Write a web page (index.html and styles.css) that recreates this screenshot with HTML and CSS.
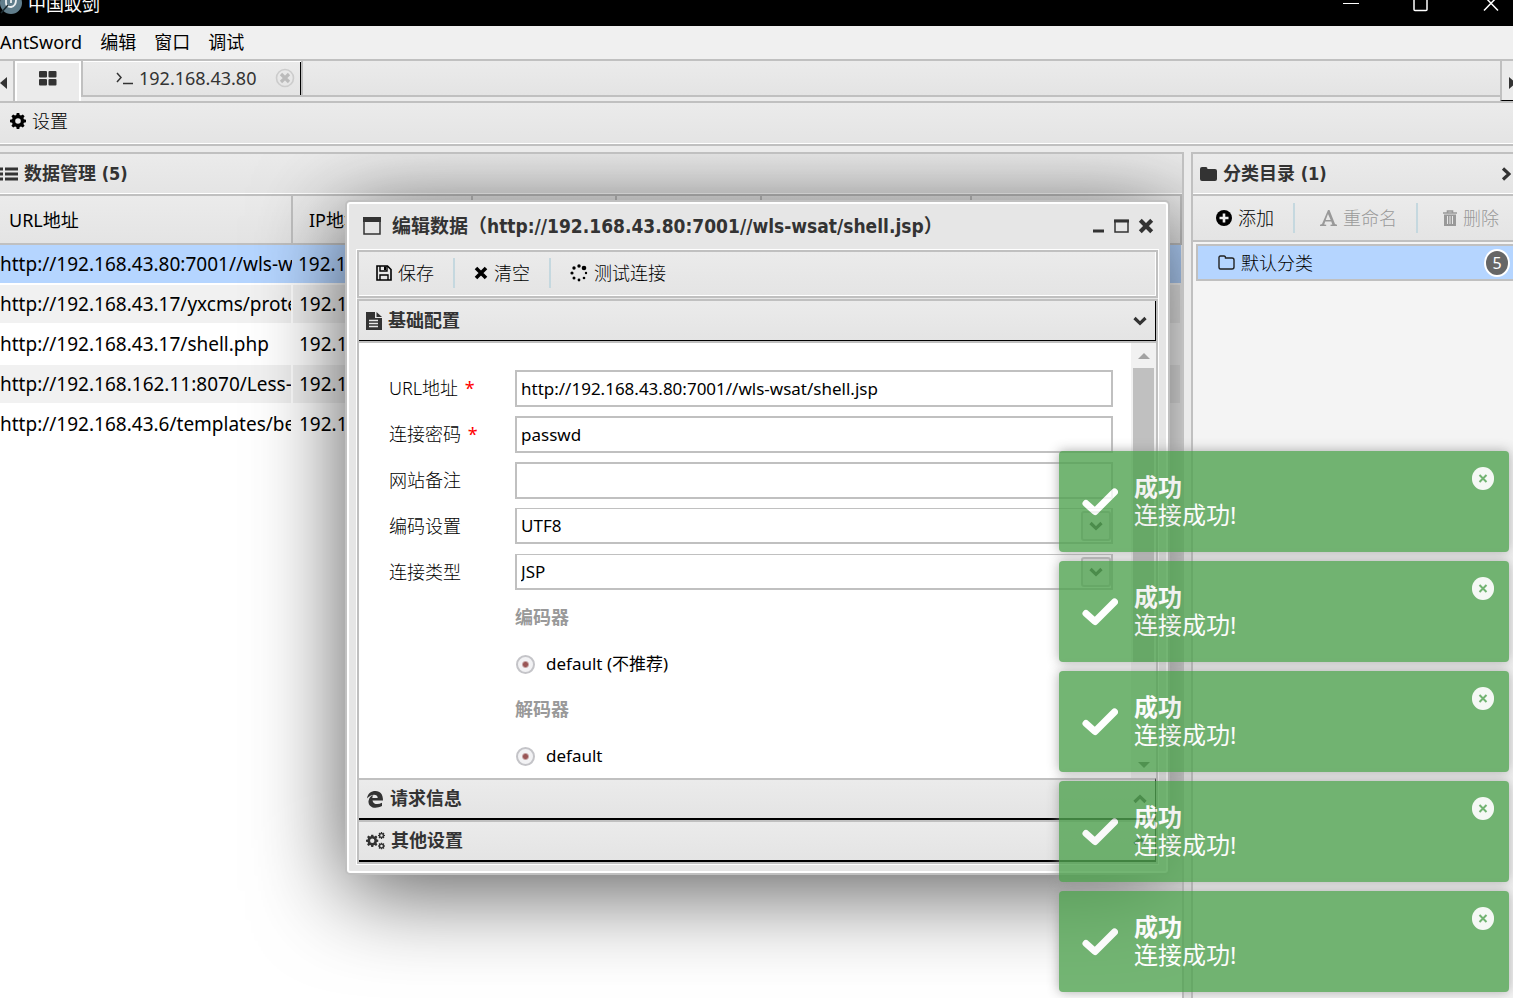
FILE: index.html
```html
<!DOCTYPE html>
<html lang="zh-CN">
<head>
<meta charset="utf-8">
<title>中国蚁剑</title>
<link rel="stylesheet" href="styles.css">
</head>
<body>
<svg class="defs" aria-hidden="true">
  <symbol id="gear" viewBox="0 0 16 16"><path fill="currentColor" fill-rule="evenodd" d="M6.700 0h2.600l.4 2.100 1.300.5L12.800 1.400l1.800 1.800-1.200 1.800.5 1.300 2.100.4v2.600l-2.100.4-.5 1.300 1.200 1.800-1.800 1.800-1.800-1.200-1.300.5-.4 2.100H6.700l-.4-2.100-1.300-.5-1.800 1.200-1.800-1.800 1.200-1.800-.5-1.300L0 9.300V6.700l2.100-.4.5-1.300-1.200-1.800 1.800-1.800L5 2.600l1.300-.5zM8 5.200a2.800 2.800 0 1 0 0 5.600 2.800 2.800 0 0 0 0-5.600z"/></symbol>
  <symbol id="cross" viewBox="0 0 14 14"><path d="M2 2l10 10M12 2L2 12" stroke="currentColor" stroke-width="3.600" fill="none"/></symbol>
  <symbol id="down" viewBox="0 0 14 10"><path d="M1.500 2L7 7.300 12.500 2" stroke="currentColor" stroke-width="3.200" fill="none"/></symbol>
  <symbol id="up" viewBox="0 0 14 10"><path d="M1.500 8L7 2.700 12.500 8" stroke="currentColor" stroke-width="3.200" fill="none"/></symbol>
  <symbol id="check" viewBox="0 0 36 28"><path d="M4 15.500L13 23.500 32.500 4" stroke="#fff" stroke-width="7" stroke-linecap="round" stroke-linejoin="round" fill="none"/></symbol>
  <symbol id="circle-x" viewBox="0 0 22 23"><rect width="22" height="23" rx="11" fill="#fff" opacity=".95"/><path d="M7.500 8l7 7M14.500 8l-7 7" stroke="#51a351" stroke-width="2"/></symbol>
</svg>

<header class="titlebar">
  <svg class="logo" width="22" height="26" viewBox="0 0 22 26"><circle cx="11" cy="3" r="11" fill="#607d8b"/><path d="M6 0v3q0 4 5 4 5-1 5-7M11-1v4" stroke="#eceff1" stroke-width="1.800" fill="none"/><path d="M1 13L8 5" stroke="#1b2a30" stroke-width="1.500"/></svg>
  <h1 class="app-name">中国蚁剑</h1>
  <div class="win-controls">
    <button type="button" aria-label="最小化"><svg width="16" height="26"><path d="M0 3.500h16" stroke="#fff"/></svg></button>
    <button type="button" aria-label="最大化"><svg width="16" height="26"><rect x="1" y="-5" width="13" height="15.500" rx="1" fill="none" stroke="#fff" stroke-width="1.500"/></svg></button>
    <button type="button" aria-label="关闭"><svg width="16" height="26"><path d="M1-4l14 14.500M15-4L1 10.500" stroke="#fff" stroke-width="1.500"/></svg></button>
  </div>
</header>

<nav class="menubar">
  <button type="button">AntSword</button><button type="button">编辑</button><button type="button">窗口</button><button type="button">调试</button>
</nav>

<div class="tabbar">
  <button type="button" class="tab-arrow tab-arrow-left" aria-label="向左"><svg width="7" height="12"><path d="M7 0v12L0 6z" fill="#333"/></svg></button>
  <button type="button" class="tab tab-home" aria-label="主页"><svg width="18" height="15" viewBox="0 0 18 15"><g fill="#333"><rect width="8" height="6.500" rx="1"/><rect x="9.500" width="8" height="6.500" rx="1"/><rect y="8" width="8" height="6.500" rx="1"/><rect x="9.500" y="8" width="8" height="6.500" rx="1"/></g></svg></button>
  <div class="tab tab-shell">
    <svg width="18" height="14"><path d="M1 2l4 4.500-4 4.500M7 12.500h10" fill="none" stroke="#333" stroke-width="1.500"/></svg>
    <span>192.168.43.80</span>
    <button type="button" class="tab-close" aria-label="关闭标签"><svg width="20" height="20"><circle cx="10" cy="10" r="8.500" fill="none" stroke="#ccc" stroke-width="1.600"/><path d="M6 6l8 8M14 6l-8 8" stroke="#bbb" stroke-width="3.200"/></svg></button>
  </div>
  <div class="tab-rest"></div>
  <button type="button" class="tab-arrow tab-arrow-right" aria-label="向右"><svg width="7" height="12"><path d="M0 0v12l7-6z" fill="#333"/></svg></button>
</div>

<div class="main-toolbar">
  <button type="button" class="tool"><svg width="16" height="16"><use href="#gear"/></svg>设置</button>
</div>

<main class="workspace">
  <section class="panel data-panel">
    <h2 class="panel-title data-title"><svg width="18" height="14"><path d="M0 2h3M0 7h3M0 12h3M5 2h13M5 7h13M5 12h13" stroke="#333" stroke-width="2.800"/></svg>数据管理 (5)</h2>
    <table class="grid">
      <colgroup><col class="c-url"><col class="c-ip"><col class="c-addr"><col class="c-note"><col class="c-ctime"><col></colgroup>
      <thead><tr><th>URL地址</th><th>IP地址</th><th></th><th></th><th></th><th></th></tr></thead>
      <tbody>
        <tr class="selected"><td>http://192.168.43.80:7001//wls-wsat/shell.jsp</td><td>192.168.43.80</td><td></td><td></td><td></td><td></td></tr>
        <tr><td>http://192.168.43.17/yxcms/protected</td><td>192.168.43.17</td><td></td><td></td><td></td><td></td></tr>
        <tr><td>http://192.168.43.17/shell.php</td><td>192.168.43.17</td><td></td><td></td><td></td><td></td></tr>
        <tr><td>http://192.168.162.11:8070/Less-7</td><td>192.168.162.11</td><td></td><td></td><td></td><td></td></tr>
        <tr><td>http://192.168.43.6/templates/beez3</td><td>192.168.43.6</td><td></td><td></td><td></td><td></td></tr>
      </tbody>
    </table>

    <div class="dialog" role="dialog" aria-labelledby="dialog-title">
      <header class="dialog-head">
        <svg width="18" height="18"><path d="M1 1v16h16V1z" fill="none" stroke="#333" stroke-width="1.500"/><path d="M0 0h18v5H0z" fill="#333"/></svg>
        <h2 id="dialog-title">编辑数据（http://192.168.43.80:7001//wls-wsat/shell.jsp）</h2>
        <button type="button" aria-label="最小化"><svg width="12" height="14"><path d="M0 12h11" stroke="#333" stroke-width="3"/></svg></button>
        <button type="button" aria-label="最大化"><svg width="15" height="14"><path d="M1 1.500h13v11.500H1z" fill="none" stroke="#333" stroke-width="1.500"/><path d="M0 2h15" stroke="#333" stroke-width="3"/></svg></button>
        <button type="button" aria-label="关闭"><svg width="16" height="16"><use href="#cross"/></svg></button>
      </header>
      <div class="dialog-body">
        <div class="dialog-toolbar">
          <button type="button" class="tool"><svg width="16" height="16"><path d="M1 1h10.500L15 4.500V15H1z" fill="none" stroke="#000" stroke-width="1.600"/><path d="M4 1v5h7V1M4 15v-5h8v5" fill="none" stroke="#000" stroke-width="1.400"/><path d="M8 1.500h2V5H8z"/></svg>保存</button>
          <button type="button" class="tool"><svg width="14" height="14"><use href="#cross"/></svg>清空</button>
          <button type="button" class="tool"><svg width="18" height="18"><circle cx="9" cy="2" r="1.700"/><circle cx="14" cy="4" r="2.300"/><circle cx="16" cy="9" r="1.200"/><circle cx="14" cy="14" r="1.300"/><circle cx="9" cy="16" r="1.400"/><circle cx="4" cy="14" r="1.500"/><circle cx="2" cy="9" r="1.600"/><circle cx="4" cy="4" r="1.700"/></svg>测试连接</button>
        </div>
        <div class="accordion">
          <button type="button" class="acc-head"><svg width="16" height="18"><path d="M0 0h9v6h7v12H0z" fill="#333"/><path d="M10.500 0L16 5h-5.500z" fill="#333"/><path d="M3 8.500h9M3 11.500h9M3 14.500h9" stroke="#e8e8e8" stroke-width="1.300"/></svg><span>基础配置</span><svg width="14" height="10"><use href="#down"/></svg></button>
          <div class="acc-body">
            <form class="form">
              <label for="url">URL地址 <b>*</b></label><input id="url" type="text" value="http://192.168.43.80:7001//wls-wsat/shell.jsp">
              <label for="pwd">连接密码 <b>*</b></label><input id="pwd" type="text" value="passwd">
              <label for="note">网站备注</label><input id="note" type="text">
              <label for="enc">编码设置</label><div class="combo"><select id="enc"><option>UTF8</option></select><span class="combo-btn"><svg width="14" height="10"><use href="#down"/></svg></span></div>
              <label for="type">连接类型</label><div class="combo"><select id="type"><option>JSP</option></select><span class="combo-btn"><svg width="14" height="10"><use href="#down"/></svg></span></div>
              <h3>编码器</h3>
              <label class="radio"><input type="radio" name="encoder" checked>default (不推荐)</label>
              <h3>解码器</h3>
              <label class="radio"><input type="radio" name="decoder" checked>default</label>
            </form>
            <div class="scrollbar" aria-hidden="true"><svg width="12" height="6"><path d="M0 6h12L6 0z" fill="#a3a3a3"/></svg><div class="thumb"></div><svg width="12" height="6"><path d="M0 0h12L6 6z" fill="#505050"/></svg></div>
          </div>
          <button type="button" class="acc-head closed"><svg width="18" height="18" viewBox="0 0 18 18"><path d="M1 8.500C2 3 5 1 9.500 1c5 0 7.500 3.500 7.500 9.500H6.500c.5 4 5.500 4.500 9.500 2.300V16C8 20 2 16.500 2.500 11 3 7.500 5 6 7.500 5 6.500 6 6.500 7 6.300 8h5.400C11.700 3.500 5 3.500 1 8.500z" fill="#333"/></svg><span>请求信息</span><svg width="14" height="10"><use href="#up"/></svg></button>
          <button type="button" class="acc-head closed"><svg width="19" height="18" viewBox="0 0 19 18"><use href="#gear" x="0" y="2.500" width="12.500" height="12.500"/><use href="#gear" x="12" y="0" width="7" height="7"/><use href="#gear" x="12" y="10.500" width="7" height="7"/></svg><span>其他设置</span><svg width="14" height="10"><use href="#up"/></svg></button>
        </div>
      </div>
    </div>
  </section>

  <aside class="panel category-panel">
    <h2 class="panel-title"><svg width="17" height="14"><path d="M0 2Q0 0 2 0h4q1.500 0 1.500 2H15q2 0 2 2v8q0 2-2 2H2q-2 0-2-2z" fill="#333"/></svg><span>分类目录 (1)</span><svg width="10" height="14"><path d="M2 1.500L8 7l-6 5.500" stroke="#333" stroke-width="3.200" fill="none"/></svg></h2>
    <div class="category-toolbar">
      <button type="button" class="tool"><svg width="16" height="16"><circle cx="8" cy="8" r="8"/><path d="M8 3.500v9M3.500 8h9" stroke="#eee" stroke-width="2.600"/></svg>添加</button>
      <button type="button" class="tool" disabled><svg width="17" height="16" viewBox="0 0 17 16"><path d="M8 0h1.500L15 14l2 .8V16h-6.500v-1.200l1.800-.4L11.300 11.500H5.200l-1 2.900 2 .4V16H0v-1.200L2 14zM8 4L5.700 10h5z" fill="#999" fill-rule="evenodd"/></svg>重命名</button>
      <button type="button" class="tool" disabled><svg width="14" height="16"><path d="M0 3h14M4.500 2.500V1h5v1.500" stroke="#999" stroke-width="1.600" fill="none"/><path d="M1 4.500h12V16H1z" fill="#999"/><path d="M4.500 6v8M7 6v8M9.500 6v8" stroke="#e8e8e8"/></svg>删除</button>
    </div>
    <ul class="tree">
      <li><svg width="17" height="15"><path d="M1 2.500Q1 1 2.500 1H6q1.500 0 1.500 2H14q2 0 2 2v7q0 2-2 2H2.500Q1 14 1 12z" fill="none" stroke="#222" stroke-width="1.400"/></svg><span>默认分类</span><em>5</em></li>
    </ul>
  </aside>
</main>

<div class="toasts">
  <div class="toast" role="alert"><svg width="36" height="28"><use href="#check"/></svg><p><strong>成功</strong>连接成功!</p><button type="button" aria-label="关闭"><svg width="22" height="23"><use href="#circle-x"/></svg></button></div>
  <div class="toast" role="alert"><svg width="36" height="28"><use href="#check"/></svg><p><strong>成功</strong>连接成功!</p><button type="button" aria-label="关闭"><svg width="22" height="23"><use href="#circle-x"/></svg></button></div>
  <div class="toast" role="alert"><svg width="36" height="28"><use href="#check"/></svg><p><strong>成功</strong>连接成功!</p><button type="button" aria-label="关闭"><svg width="22" height="23"><use href="#circle-x"/></svg></button></div>
  <div class="toast" role="alert"><svg width="36" height="28"><use href="#check"/></svg><p><strong>成功</strong>连接成功!</p><button type="button" aria-label="关闭"><svg width="22" height="23"><use href="#circle-x"/></svg></button></div>
  <div class="toast" role="alert"><svg width="36" height="28"><use href="#check"/></svg><p><strong>成功</strong>连接成功!</p><button type="button" aria-label="关闭"><svg width="22" height="23"><use href="#circle-x"/></svg></button></div>
</div>
</body>
</html>
```
FILE: styles.css
```css
:root {
  --line: #c0c0c0;
  --bar: linear-gradient(#ebebeb, #e4e4e4);
  --ui: "Noto Sans", "Noto Sans CJK SC", sans-serif;
  --ui-bold: "DejaVu Sans Condensed", "Noto Sans CJK SC", sans-serif;
}

* { box-sizing: border-box; }

body {
  margin: 0;
  height: 100vh;
  overflow: hidden;
  display: flex;
  flex-direction: column;
  background: #ebebeb;
  color: #000;
  font: 18px/24px var(--ui);
}

h1, h2, h3, p, ul { margin: 0; padding: 0; }

button {
  border: 0;
  padding: 0;
  background: none;
  color: inherit;
  font: inherit;
}

svg { display: block; flex: none; overflow: hidden; }
.defs { position: absolute; width: 0; height: 0; }

.titlebar {
  flex: none;
  height: 26px;
  background: #000;
  color: #fff;
  display: flex;
  align-items: flex-start;
  gap: 6px;
  overflow: hidden;
}
.app-name { font: 18px/8px var(--ui); flex: 1; }
.win-controls { display: flex; gap: 54px; padding-right: 14px; }

.menubar {
  flex: none;
  height: 33px;
  padding-bottom: 2px;
  background: #f0f0f0;
  display: flex;
  align-items: center;
  gap: 18px;
}

.tabbar {
  flex: none;
  height: 44px;
  display: flex;
  border-top: 2px solid var(--line);
  border-bottom: 2px solid var(--line);
  background: #ebebeb;
}
.tab-arrow { display: flex; align-items: center; padding-top: 4px; }
.tab-arrow-left { width: 15px; border-right: 2px solid var(--line); }
.tab-arrow-right {
  width: 13px;
  padding-left: 7px;
  overflow: hidden;
  border-left: 2px solid var(--line);
  border-bottom: 1px solid #000;
}
.tab { display: flex; align-items: center; color: #333; }
.tab-home {
  width: 66px;
  justify-content: center;
  padding-bottom: 8px;
  border: 2px solid #fff;
  border-bottom: 0;
}
.tab-shell {
  height: 36px;
  width: 221px;
  padding-left: 33px;
  gap: 5px;
  border: solid var(--line);
  border-width: 0 1px 2px 2px;
  box-shadow: inset 0 1px #fff, inset -1px 0 #000;
  background: var(--bar);
}
.tab-shell span { flex: 1; }
.tab-close { margin-right: 6px; }
.tab-rest {
  flex: 1;
  height: 36px;
  border-bottom: 2px solid var(--line);
  border-left: 1px solid var(--line);
  background: var(--bar);
}

.main-toolbar {
  flex: none;
  height: 43px;
  display: flex;
  align-items: center;
  padding: 0 10px 5px;
  border-bottom: 2px solid var(--line);
  background: var(--bar);
  box-shadow: inset 0 -1px #fff;
}
.tool { display: flex; align-items: center; gap: 6px; font-weight: 300; white-space: nowrap; }
.tool:disabled { color: #999; }

.workspace { flex: 1; min-height: 0; display: flex; gap: 7px; padding-top: 6px; }
.panel { border: 2px solid var(--line); border-bottom: 0; }
.panel-title {
  height: 42px;
  display: flex;
  align-items: center;
  gap: 6px;
  color: #333;
  font: bold 18px/24px var(--ui-bold);
  border-bottom: 2px solid var(--line);
  background: var(--bar);
  box-shadow: inset 0 -1px #fff;
}
.data-panel { flex: 1; position: relative; overflow: hidden; border-left: 0; background: #fff; }

.grid { width: 100%; table-layout: fixed; border-collapse: collapse; font-size: 19px; }
.c-url { width: 292px; }
.c-ip { width: 180px; }
.c-addr { width: 144px; }
.c-note { width: 145px; }
.c-ctime { width: 210px; }
.grid th {
  height: 48px;
  padding: 0 9px;
  text-align: left;
  font: 18px/24px var(--ui);
  border-right: 2px solid var(--line);
  border-bottom: 2px solid var(--line);
  background: var(--bar);
}
.grid th + th { padding-left: 16px; }
.grid td {
  height: 40px;
  padding: 0;
  overflow: hidden;
  white-space: nowrap;
  border-right: 2px solid #fff;
  border-bottom: 2px solid #fff;
}
.grid td + td { padding-left: 6px; }
.grid tbody tr:nth-child(even) { background: #f1f1f1; }
.grid tbody .selected { background: #b5d5ff; }
.grid .selected td { border-right: 0; }

.dialog {
  position: absolute;
  left: 345px;
  top: 46px;
  width: 825px;
  padding: 0 9px 8px;
  border: 2px solid var(--line);
  border-radius: 5px;
  background: #e6e6e6;
  box-shadow: inset 0 0 0 2px #fff, 0 16px 90px rgba(0, 0, 0, .65);
}
.dialog-head { height: 47px; display: flex; align-items: center; gap: 9px; padding: 0 5px 0 7px; color: #333; }
.dialog-head h2 { flex: 1; font: bold 19px/24px var(--ui-bold); padding-left: 2px; white-space: nowrap; }
.dialog-body { border: 1px solid #fff; }
.dialog-toolbar {
  height: 48px;
  display: flex;
  align-items: center;
  padding: 0 17px 3px;
  border: 2px solid var(--line);
  background: var(--bar);
  box-shadow: inset -1px -1px #fff;
}
.dialog-toolbar .tool { padding-right: 19px; }
.dialog-toolbar .tool + .tool { padding-left: 19px; border-left: 2px solid #c5d8df; height: 30px; }
.accordion { border: 2px solid var(--line); margin-top: 1px; }
.acc-head {
  width: 100%;
  height: 40px;
  display: flex;
  align-items: center;
  gap: 6px;
  padding: 0 8px 0 7px;
  color: #333;
  font: bold 18px/24px var(--ui-bold);
  text-align: left;
  border-right: 1px solid #000;
  border-bottom: 1px solid #000;
  background: var(--bar);
}
.acc-head span { flex: 1; }
.closed { border-top: 2px solid var(--line); border-bottom-width: 2px; height: 42px; }
.acc-body { display: flex; height: 437px; border-top: 2px solid var(--line); background: #fff; }

.form {
  flex: 1;
  display: grid;
  grid-template-columns: 126px 1fr;
  grid-auto-rows: 36px;
  row-gap: 10px;
  align-items: center;
  padding: 27px 18px 0 30px;
}
.form label { font-weight: 300; }
.form label b { color: #f00; font-weight: 400; margin-left: 2px; }
.form input[type="text"], .form select {
  width: 100%;
  height: 37px;
  padding: 0 4px;
  border: 2px solid var(--line);
  border-radius: 0;
  appearance: none;
  background: #fff;
  color: #000;
  font: 17px/24px var(--ui);
}
.combo { position: relative; }
.form .combo select { height: 36px; display: block; border-top-width: 1px; }
.combo-btn {
  position: absolute;
  right: 2px;
  top: 3px;
  width: 30px;
  height: 30px;
  display: flex;
  align-items: center;
  justify-content: center;
  color: #333;
  border: 2px solid var(--line);
  border-radius: 3px;
  background: #eee;
  pointer-events: none;
}
.form h3 { grid-column: 2; color: #999; font: bold 18px/24px var(--ui-bold); }
.form .radio { grid-column: 2; display: flex; align-items: center; gap: 11px; font-weight: 400; font-size: 17px; }
.radio input {
  width: 19px;
  height: 19px;
  margin: 0 0 0 1px;
  appearance: none;
  border: 2px solid #c4c4c8;
  border-radius: 50%;
  background: radial-gradient(circle, #955 0 2px, #f2f2f4 4px);
}
.scrollbar { width: 25px; padding: 10px 2px; display: flex; flex-direction: column; align-items: center; background: #f1f1f1; }
.thumb { width: 21px; height: 294px; margin: 9px 0 auto; background: var(--line); }

.category-panel { width: 322px; border-right: 0; background: #f4f4f4; }
.category-panel .panel-title { padding: 0 2px 0 7px; }
.panel-title span { flex: 1; }
.category-toolbar {
  height: 46px;
  display: flex;
  align-items: center;
  padding-left: 23px;
  border-bottom: 2px solid var(--line);
  background: var(--bar);
}
.category-toolbar .tool { height: 30px; padding-right: 19px; }
.category-toolbar .tool + .tool { padding-left: 25px; border-left: 2px solid #c5d8df; }
.tree { list-style: none; padding: 2px 0 0 3px; }
.tree li {
  height: 37px;
  display: flex;
  align-items: center;
  gap: 6px;
  padding: 0 3px 0 20px;
  border: 2px solid var(--line);
  border-right: 0;
  background: #b5d5ff;
  font-weight: 300;
}
.tree span { flex: 1; }
.tree em {
  width: 26px;
  height: 28px;
  border: 2px solid #fff;
  border-radius: 50%;
  background: #666;
  color: #fff;
  font: 16px/24px var(--ui);
  text-align: center;
}

.toasts { position: absolute; right: 4px; bottom: 6px; width: 450px; display: flex; flex-direction: column; gap: 9px; }
.toast {
  height: 101px;
  display: flex;
  align-items: center;
  gap: 16px;
  padding: 0 15px 0 23px;
  border-radius: 4px;
  background: #51a351;
  box-shadow: 0 0 12px #999;
  color: #fff;
  opacity: .8;
}
.toast p { flex: 1; padding-bottom: 2px; font: 24px/28px var(--ui); }
.toast strong { display: block; }
.toast button { align-self: flex-start; padding-top: 16px; }
```
